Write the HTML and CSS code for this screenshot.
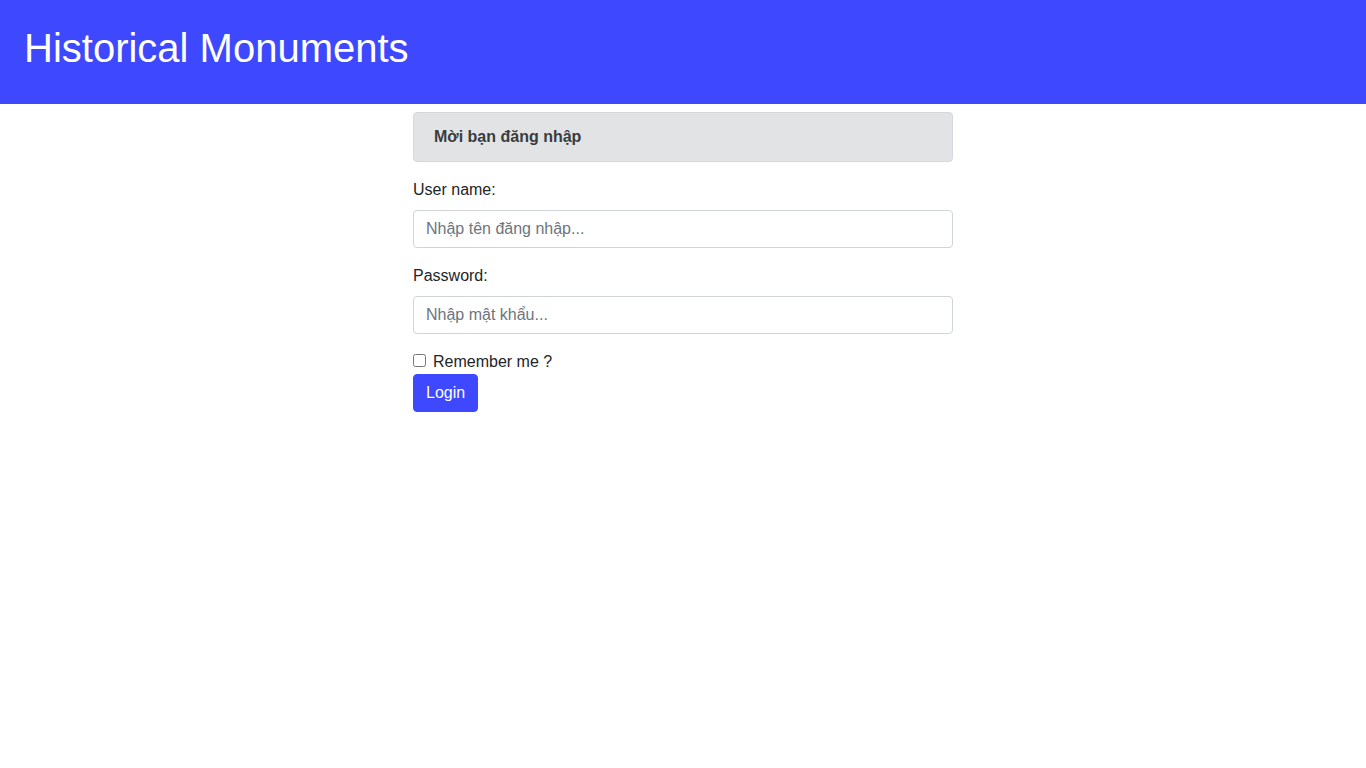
FILE: index.html
```html
<!DOCTYPE html>
<html lang="vi">
<head>
<meta charset="utf-8">
<title>Historical Monuments</title>
<link rel="stylesheet" href="styles.css">
</head>
<body>
<header class="site-header">
  <h1 class="site-title">Historical Monuments</h1>
</header>
<main class="container">
  <div class="login-col">
    <div class="alert">Mời bạn đăng nhập</div>
    <form class="login-form">
      <div class="form-group">
        <label class="form-label" for="user">User name:</label>
        <input class="form-control" id="user" type="text" placeholder="Nhập tên đăng nhập...">
      </div>
      <div class="form-group">
        <label class="form-label" for="pass">Password:</label>
        <input class="form-control" id="pass" type="password" placeholder="Nhập mật khẩu...">
      </div>
      <div class="check-row">
        <input class="check" id="remember" type="checkbox"><label for="remember">Remember me ?</label>
      </div>
      <button class="btn" type="button">Login</button>
    </form>
  </div>
</main>
</body>
</html>
```

FILE: styles.css
```css
* { box-sizing: border-box; }
html, body { margin: 0; padding: 0; }
body {
  font-family: "Liberation Sans", Arial, sans-serif;
  font-size: 16px;
  line-height: 1.5;
  color: #212529;
  background: #fff;
}
.site-header {
  background: #3d48ff;
  padding: 24px;
}
.site-title {
  margin: 0 0 8px 0;
  font-size: 40px;
  font-weight: 400;
  line-height: 1.2;
  color: #fff;
}
.container {
  display: flex;
  justify-content: center;
  padding-top: 8px;
}
.login-col {
  width: 540px;
}
.alert {
  background: #e2e3e5;
  border: 1px solid #d6d8db;
  border-radius: 4px;
  padding: 12px 20px;
  color: #383d41;
  font-weight: 700;
  margin-bottom: 16px;
}
.login-form { margin: 0; }
.form-group { margin-bottom: 16px; }
.form-label {
  display: block;
  margin-bottom: 8px;
}
.form-control {
  display: block;
  width: 100%;
  height: 38px;
  padding: 6px 12px;
  font-family: inherit;
  font-size: 16px;
  line-height: 1.5;
  color: #495057;
  background: #fff;
  border: 1px solid #ced4da;
  border-radius: 4px;
}
.form-control::placeholder { color: #6c757d; opacity: 1; }
.check-row {
  height: 24px;
}
.check {
  width: 13px;
  height: 13px;
  margin: 3px 7px 3px 0;
}
.btn {
  display: inline-block;
  height: 38px;
  padding: 6px 12px;
  font-family: inherit;
  font-size: 16px;
  line-height: 1.5;
  color: #fff;
  background: #3d48ff;
  border: 1px solid #3d48ff;
  border-radius: 4px;
  cursor: pointer;
}
```
